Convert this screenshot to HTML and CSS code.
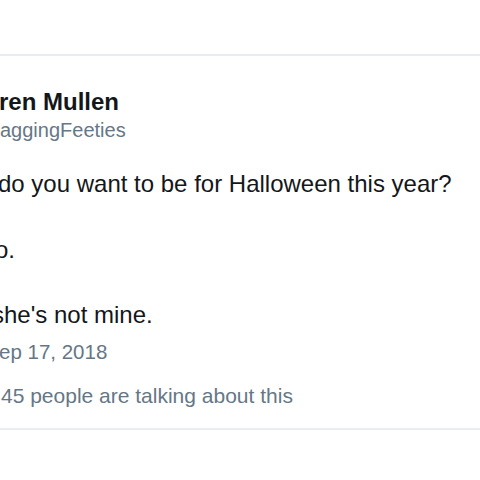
FILE: index.html
```html
<!DOCTYPE html>
<html lang="en">
<head>
<meta charset="utf-8">
<title>Tweet</title>
<link rel="stylesheet" href="styles.css">
</head>
<body>
<article class="card">
  <header class="author">
    <div class="name"><span class="cut-name">ren Mullen</span></div>
    <div class="handle"><span class="cut-handle">aggingFeeties</span></div>
  </header>
  <div class="text">
    <p class="line cut-1">do you want to be for Halloween this year?</p>
    <p class="line blank">&nbsp;</p>
    <p class="line cut-3">o.</p>
    <p class="line blank">&nbsp;</p>
    <p class="line cut-5">she's not mine.</p>
  </div>
  <div class="date"><span class="cut-date">ep 17, 2018</span></div>
  <div class="talk"><span class="cut-talk">45 people are talking about this</span></div>
</article>
</body>
</html>
```
FILE: styles.css
```css
html, body {
  margin: 0;
  padding: 0;
  background: #ffffff;
  overflow: hidden;
}
body {
  width: 480px;
  height: 480px;
  font-family: "Liberation Sans", Arial, Helvetica, sans-serif;
  color: #14171a;
}
.card {
  margin-top: 54px;
  border-top: 2px solid #e9edf1;
  border-bottom: 2px solid #e9edf1;
  padding: 32px 0 19px 0;
  overflow: hidden;
}
.author {
  display: flex;
  flex-direction: column;
  gap: 1px;
}
.name {
  font-size: 24px;
  line-height: 28px;
  font-weight: bold;
  color: #14171a;
  white-space: nowrap;
}
.cut-name { display: inline-block; margin-left: -1px; }
.handle {
  font-size: 20px;
  line-height: 26px;
  color: #657786;
  white-space: nowrap;
}
.cut-handle { display: inline-block; margin-left: 0; }
.text {
  margin-top: 25px;
}
.line {
  margin: 0;
  font-size: 24px;
  line-height: 32.75px;
  color: #14171a;
  white-space: nowrap;
}
.cut-1 { margin-left: -2px; }
.cut-3 { margin-left: -5px; }
.cut-5 { margin-left: -8px; }
.date {
  margin-top: 7px;
  font-size: 20.5px;
  line-height: 26px;
  color: #657786;
  white-space: nowrap;
}
.cut-date { display: inline-block; margin-left: -1px; }
.talk {
  margin-top: 18px;
  font-size: 21px;
  line-height: 26px;
  color: #657786;
  white-space: nowrap;
}
.cut-talk { display: inline-block; margin-left: 1px; }
```
